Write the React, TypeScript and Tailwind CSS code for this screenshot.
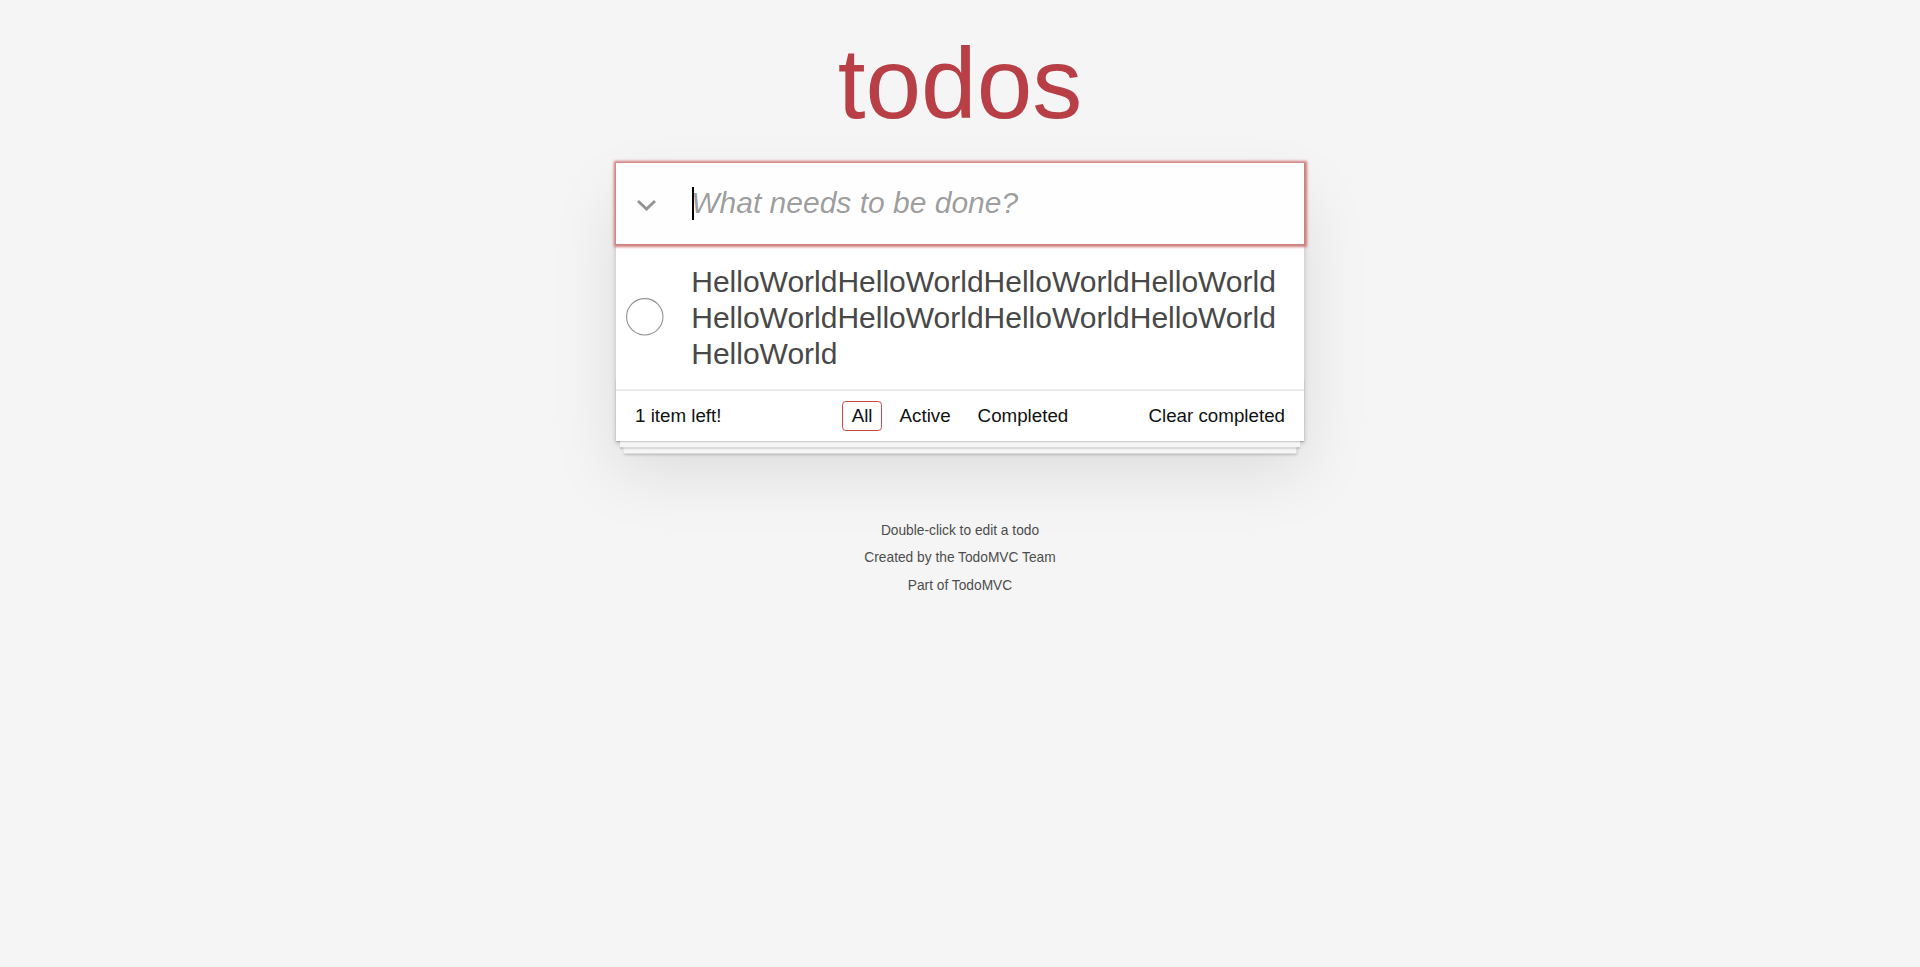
import { useState } from 'react';

const TEXT = 'HelloWorld'.repeat(9);

const App = () => {
    const [filter, setFilter] = useState('all');
    const filters = [
        { key: 'all', label: 'All' },
        { key: 'active', label: 'Active' },
        { key: 'completed', label: 'Completed' },
    ];
    return (
        <div className="min-h-screen w-full bg-[#f5f5f5] font-['Liberation_Sans',Arial,sans-serif] text-[17.5px] leading-[24.5px] text-[#111111]">
            <div className="mx-auto w-[687.5px] pt-[33px]">
                <h1 className="text-center text-[100px] leading-none font-normal text-[#b83f45]">todos</h1>
                <section className="relative mt-[29.5px] bg-white shadow-[0_2.5px_5px_0_rgba(0,0,0,0.2),0_31.25px_62.5px_0_rgba(0,0,0,0.1)]">
                    <header className="relative z-10">
                        <input
                            className="block h-[81.25px] w-full bg-[rgba(0,0,0,0.003)] py-[20px] pr-[20px] pl-[75px] text-[30px] leading-[42px] text-[#484848] shadow-[0_0_2.5px_2.5px_#CF7D7D] outline-none placeholder:italic placeholder:text-black/40"
                            placeholder="What needs to be done?"
                        />
                        <span className="absolute top-[24.5px] left-[76px] h-[33px] w-[2px] bg-black" />
                        <svg
                            className="absolute top-[36px] left-[19.5px]"
                            width="21"
                            height="12"
                            viewBox="0 0 21 12"
                            fill="none"
                        >
                            <polyline points="2,2 10.5,10 19,2" stroke="#949494" strokeWidth="3" />
                        </svg>
                    </header>
                    <main className="border-t-[1.25px] border-[#e6e6e6]">
                        <ul>
                            <li className="flex items-center border-b-[1.25px] border-[#ededed]">
                                <div className="flex w-[75px] shrink-0">
                                    <svg className="ml-[10px]" width="37.5" height="37.5" viewBox="0 0 100 100">
                                        <circle cx="50" cy="50" r="48.5" fill="none" stroke="#949494" strokeWidth="3" />
                                    </svg>
                                </div>
                                <label className="block flex-1 pt-[18.75px] pr-[18.75px] pb-[17.25px] text-[30px] leading-[1.2] text-[#484848] break-all">
                                    {TEXT}
                                </label>
                            </li>
                        </ul>
                    </main>
                    <footer className="relative grid h-[51.25px] grid-cols-[1fr_auto_1fr] grid-rows-[25px] items-center border-t-[1.25px] border-[#e6e6e6] px-[18.75px] py-[12.5px] text-[18.75px] leading-[25px]">
                        <div className="absolute inset-x-0 bottom-0 h-[62.5px] shadow-[0_1.25px_1.25px_rgba(0,0,0,0.2),0_10px_0_-3.75px_#f6f6f6,0_11.25px_1.25px_-3.75px_rgba(0,0,0,0.2),0_20px_0_-7.5px_#f6f6f6,0_21.25px_2.5px_-7.5px_rgba(0,0,0,0.2)]" />
                        <span className="relative justify-self-start">1 item left!</span>
                        <ul className="relative flex items-center">
                            {filters.map((f) => (
                                <li key={f.key}>
                                    <a
                                        onClick={() => setFilter(f.key)}
                                        className={
                                            filter === f.key
                                                ? 'mx-[3.75px] block cursor-pointer rounded-[3.75px] border-[1.25px] border-[#ce4646] px-[8.75px] py-[3.75px] leading-[21px]'
                                                : 'mx-[3.75px] block cursor-pointer rounded-[3.75px] border-[1.25px] border-transparent px-[8.75px] py-[3.75px] leading-[21px]'
                                        }
                                    >
                                        {f.label}
                                    </a>
                                </li>
                            ))}
                        </ul>
                        <button className="relative cursor-pointer justify-self-end">Clear completed</button>
                    </footer>
                </section>
                <div className="mt-[82.5px] flex flex-col gap-[13.75px] text-center text-[13.75px] leading-none text-[#4d4d4d]">
                    <p>Double-click to edit a todo</p>
                    <p>Created by the TodoMVC Team</p>
                    <p>Part of TodoMVC</p>
                </div>
            </div>
        </div>
    );
};

export default App;
